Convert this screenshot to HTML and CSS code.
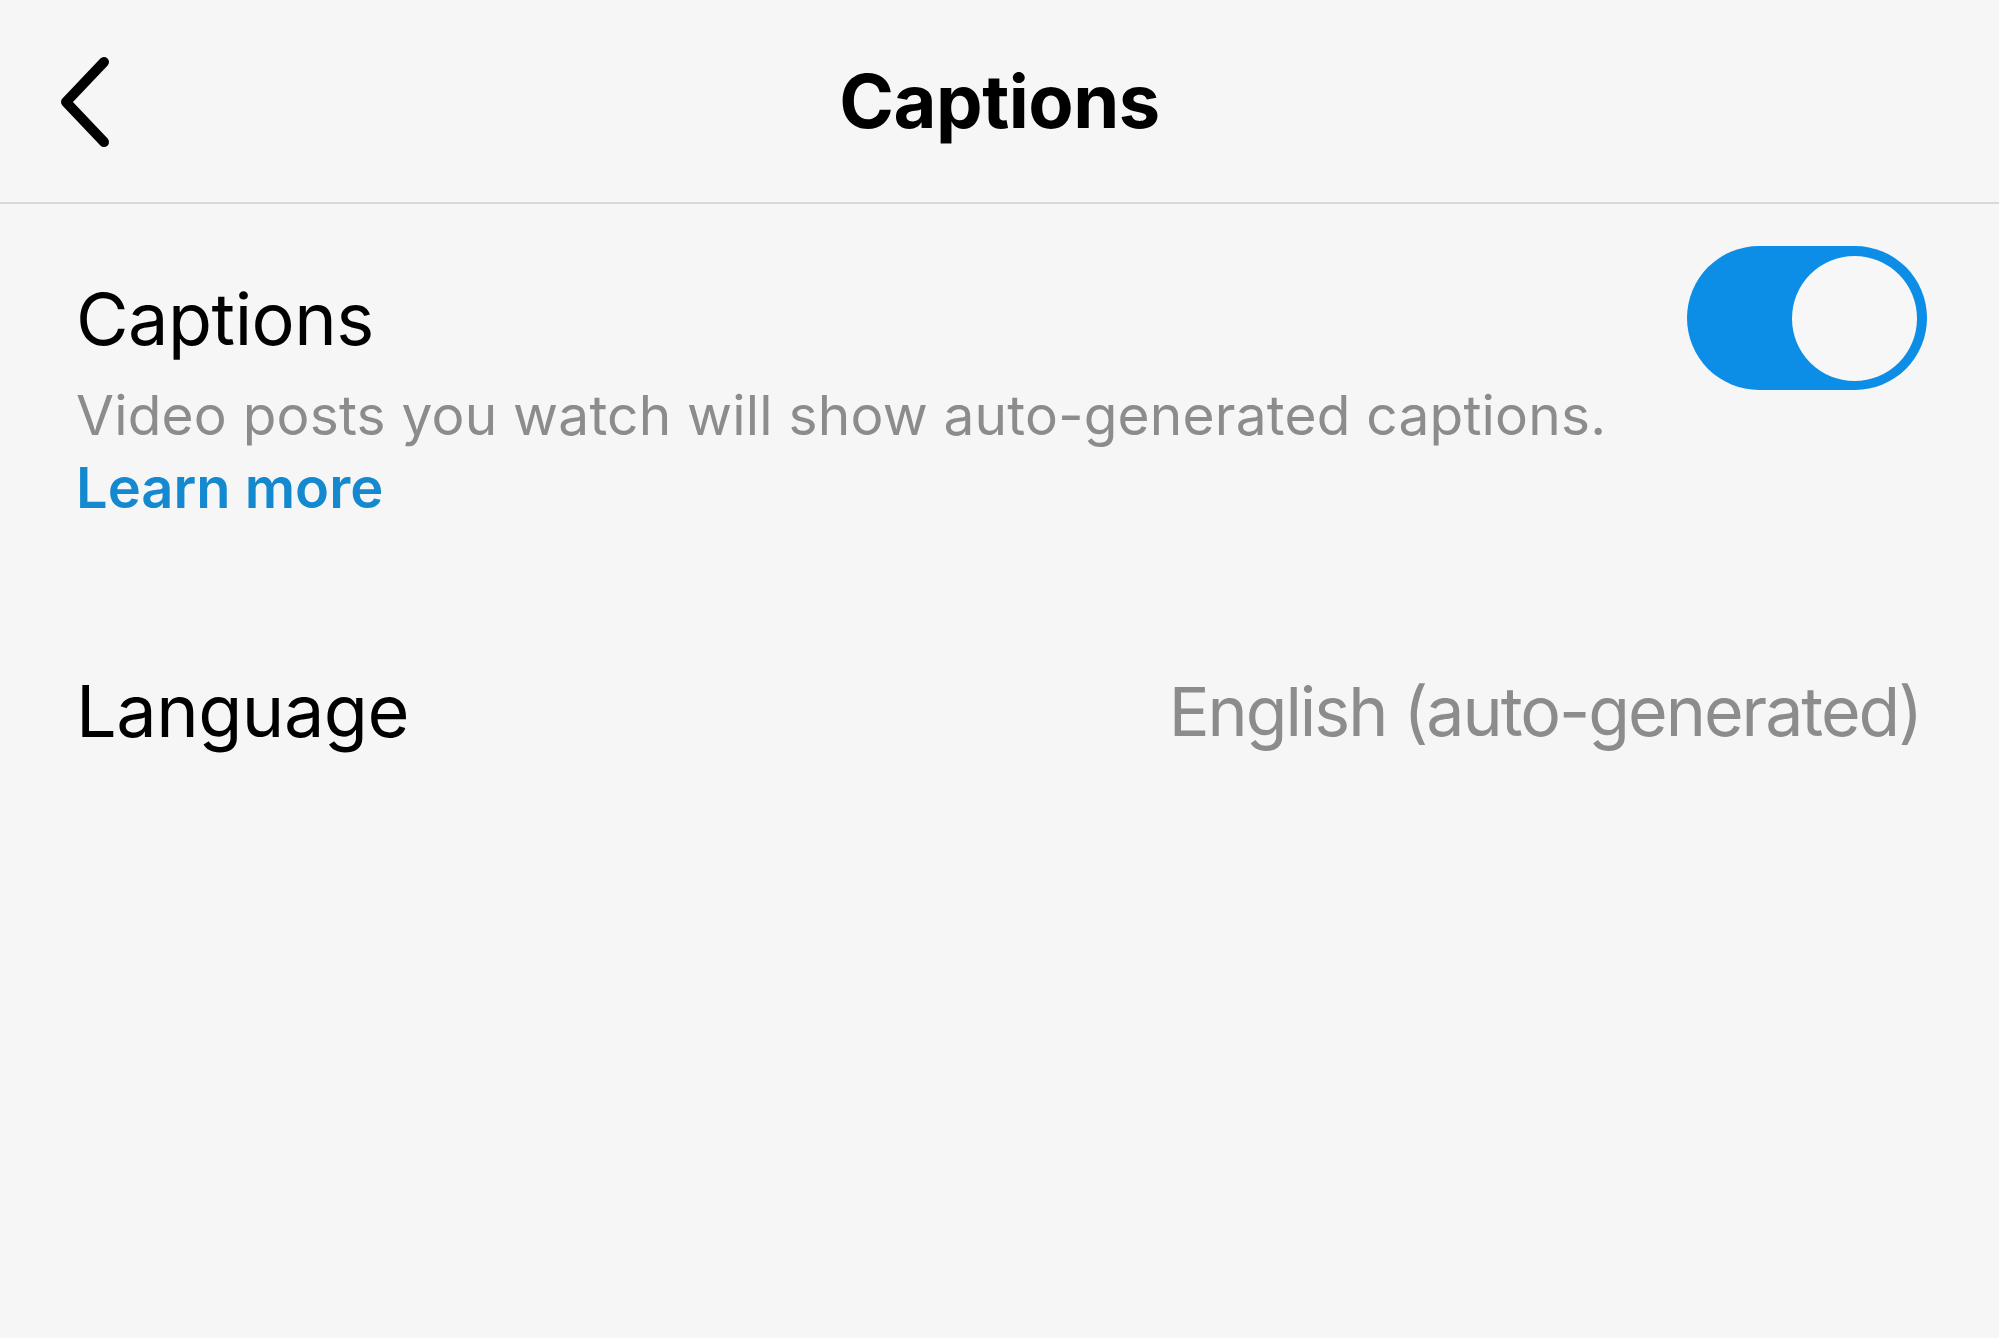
FILE: index.html
```html
<!DOCTYPE html>
<html lang="en">
<head>
<meta charset="utf-8">
<title>Captions</title>
<link rel="stylesheet" href="styles.css">
</head>
<body>
<div class="screen">
  <header class="nav">
    <button class="back" aria-label="Back">
      <svg width="60" height="96" viewBox="0 0 60 96"><path d="M50 8 L12 48 L50 88" fill="none" stroke="#000" stroke-width="10" stroke-linecap="round" stroke-linejoin="round"/></svg>
    </button>
    <h1 class="title">Captions</h1>
  </header>
  <section class="setting">
    <div class="setting-text">
      <div class="label">Captions</div>
      <div class="desc">Video posts you watch will show auto-generated captions.</div>
      <a class="link" href="#">Learn more</a>
    </div>
    <div class="toggle"><div class="knob"></div></div>
  </section>
  <section class="row">
    <div class="label">Language</div>
    <div class="value">English (auto-generated)</div>
  </section>
</div>
</body>
</html>
```

FILE: styles.css
```css
html, body {
  margin: 0;
  padding: 0;
  background: #f6f6f6;
}
.screen {
  width: 1999px;
  height: 1338px;
  font-family: Inter, "Noto Sans", sans-serif;
  color: #000;
}
.nav {
  position: relative;
  height: 202px;
  border-bottom: 2px solid #d9d9d9;
  display: flex;
  align-items: center;
  justify-content: center;
}
.back {
  position: absolute;
  left: 54px;
  top: 54px;
  padding: 0;
  border: 0;
  background: none;
  display: flex;
}
.title {
  margin: 0;
  font-size: 74px;
  font-weight: 700;
  letter-spacing: -0.5px;
  line-height: 1;
}
.setting {
  display: flex;
  justify-content: space-between;
  align-items: flex-start;
  padding: 42px 72px 0 76px;
}
.setting-text {
  display: flex;
  flex-direction: column;
}
.label {
  font-size: 72px;
  line-height: 90px;
  letter-spacing: -0.5px;
}
.setting .label {
  margin-top: 28px;
}
.desc {
  margin-top: 9px;
  font-size: 55px;
  line-height: 84px;
  letter-spacing: 0.2px;
  color: #8c8c8c;
}
.link {
  margin-top: -5px;
  font-size: 56px;
  line-height: 72px;
  font-weight: 600;
  color: #1589d0;
  text-decoration: none;
}
.toggle {
  width: 240px;
  height: 144px;
  border-radius: 72px;
  background: #0d8ee6;
  display: flex;
  align-items: center;
  justify-content: flex-end;
  padding-right: 10px;
  box-sizing: border-box;
}
.knob {
  width: 125px;
  height: 125px;
  border-radius: 50%;
  background: #f7f7f7;
}
.row {
  display: flex;
  justify-content: space-between;
  align-items: center;
  padding: 142px 78px 0 76px;
}
.value {
  font-size: 68px;
  line-height: 90px;
  color: #8c8c8c;
  letter-spacing: -2px;
}
```
